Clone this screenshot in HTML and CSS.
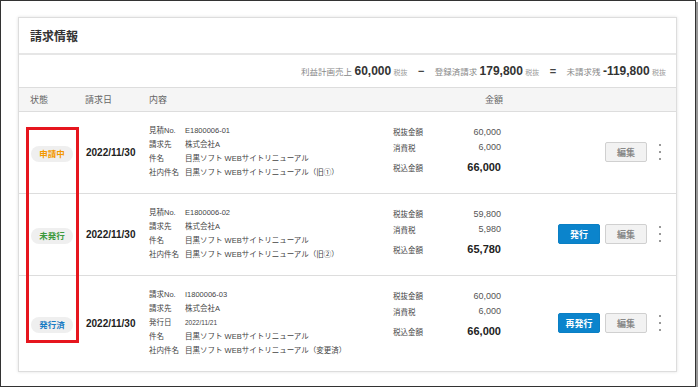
FILE: index.html
```html
<!DOCTYPE html>
<html lang="ja">
<head>
  <meta charset="UTF-8">
  <title>請求情報</title>
  <link rel="stylesheet" href="styles.css">
</head>
<body>
  <div class="frame">
    <div class="card">
      <div class="card-head">請求情報</div>
      <div class="summary">
        利益計画売上 <b>60,000</b> <small>税抜</small>
        <em>−</em>
        登録済請求 <b>179,800</b> <small>税抜</small>
        <em>=</em>
        未請求残 <b>-119,800</b> <small>税抜</small>
      </div>
      <div class="row thead">
        <div>状態</div>
        <div>請求日</div>
        <div>内容</div>
        <div class="th-amt">金額</div>
        <div></div>
      </div>

      <div class="row">
        <div><span class="badge orange">申請中</span></div>
        <div class="date">2022/11/30</div>
        <div class="info">
          <span>見積No.</span><span>E1800006-01</span>
          <span>請求先</span><span>株式会社A</span>
          <span>件名</span><span>目黒ソフト WEBサイトリニューアル</span>
          <span>社内件名</span><span>目黒ソフト WEBサイトリニューアル（旧①）</span>
        </div>
        <div class="amt">
          <span>税抜金額</span><span class="num">60,000</span>
          <span>消費税</span><span class="num">6,000</span>
          <span>税込金額</span><span class="num total">66,000</span>
        </div>
        <div class="actions">
          <button class="btn">編集</button>
          <span class="kebab"><i></i><i></i><i></i></span>
        </div>
      </div>

      <div class="row">
        <div><span class="badge green">未発行</span></div>
        <div class="date">2022/11/30</div>
        <div class="info">
          <span>見積No.</span><span>E1800006-02</span>
          <span>請求先</span><span>株式会社A</span>
          <span>件名</span><span>目黒ソフト WEBサイトリニューアル</span>
          <span>社内件名</span><span>目黒ソフト WEBサイトリニューアル（旧②）</span>
        </div>
        <div class="amt">
          <span>税抜金額</span><span class="num">59,800</span>
          <span>消費税</span><span class="num">5,980</span>
          <span>税込金額</span><span class="num total">65,780</span>
        </div>
        <div class="actions">
          <button class="btn primary">発行</button>
          <button class="btn">編集</button>
          <span class="kebab"><i></i><i></i><i></i></span>
        </div>
      </div>

      <div class="row">
        <div><span class="badge blue">発行済</span></div>
        <div class="date">2022/11/30</div>
        <div class="info">
          <span>請求No.</span><span>I1800006-03</span>
          <span>請求先</span><span>株式会社A</span>
          <span>発行日</span><span class="small">2022/11/21</span>
          <span>件名</span><span>目黒ソフト WEBサイトリニューアル</span>
          <span>社内件名</span><span>目黒ソフト WEBサイトリニューアル（変更済）</span>
        </div>
        <div class="amt">
          <span>税抜金額</span><span class="num">60,000</span>
          <span>消費税</span><span class="num">6,000</span>
          <span>税込金額</span><span class="num total">66,000</span>
        </div>
        <div class="actions">
          <button class="btn primary">再発行</button>
          <button class="btn">編集</button>
          <span class="kebab"><i></i><i></i><i></i></span>
        </div>
      </div>
    </div>
    <div class="mark"></div>
  </div>
</body>
</html>
```

FILE: styles.css
```css
body {
  margin: 0;
  font-family: "Liberation Sans", "Noto Sans CJK JP", sans-serif;
  color: #333;
  background: #fff;
}
.frame {
  position: relative;
  box-sizing: border-box;
  width: 696px;
  height: 387px;
  padding: 16px 18px 0 17px;
  border: 1px solid #333;
  box-shadow: 2px 2px 0 #999;
}
.card {
  background: #fff;
  border: 1px solid #ddd;
  box-shadow: 0 0 3px rgba(0, 0, 0, 0.12);
}
.card-head {
  height: 35px;
  padding-left: 11px;
  display: flex;
  align-items: center;
  font-size: 12px;
  font-weight: bold;
  color: #333;
  border-bottom: 2px solid #e6e6e6;
}
.summary {
  height: 32px;
  line-height: 32px;
  padding-right: 10px;
  text-align: right;
  font-size: 8.5px;
  color: #888;
  border-bottom: 1px solid #ddd;
  white-space: nowrap;
}
.summary b {
  font-size: 12px;
  color: #333;
}
.summary small {
  font-size: 7px;
  color: #999;
}
.summary em {
  font-style: normal;
  font-weight: bold;
  font-size: 11px;
  color: #444;
  margin: 0 8px;
}
.row {
  display: grid;
  grid-template-columns: 55px 64px 244px 108px 1fr;
  align-items: center;
  padding: 12px 11px 13px 11px;
  border-bottom: 1px solid #ddd;
}
.row:last-child {
  border-bottom: none;
}
.thead {
  height: 23px;
  padding-top: 0;
  padding-bottom: 0;
  background: #f5f5f5;
  font-size: 9px;
  color: #666;
}
.th-amt {
  text-align: right;
  margin-right: -2px;
}
.badge {
  display: inline-block;
  width: 42px;
  height: 16px;
  line-height: 16px;
  margin-left: 1px;
  border-radius: 8px;
  background: #efefef;
  text-align: center;
  font-size: 8.5px;
  font-weight: bold;
}
.orange { color: #f39800; }
.green { color: #3d9a3d; }
.blue { color: #1b7cc4; }
.date {
  margin-left: 1px;
  font-size: 10px;
  font-weight: bold;
  color: #222;
}
.info {
  display: grid;
  grid-template-columns: 36px 1fr;
  font-size: 7.5px;
  line-height: 14px;
  color: #444;
  white-space: nowrap;
}
.info .small {
  font-size: 6.5px;
}
.amt {
  align-self: start;
  display: grid;
  grid-template-columns: 1fr auto;
  grid-template-rows: 15px 16px 24px;
  align-items: center;
  font-size: 7.5px;
  color: #444;
}
.amt .num {
  text-align: right;
  font-size: 9px;
  color: #555;
}
.amt .total {
  font-size: 11px;
  font-weight: bold;
  color: #222;
}
.actions {
  display: flex;
  justify-content: flex-end;
  align-items: center;
  gap: 5px;
}
.btn {
  width: 42px;
  height: 20px;
  padding: 0;
  border: 1px solid #d0d0d0;
  border-radius: 2px;
  background: #f2f2f2;
  color: #888;
  font-family: inherit;
  font-size: 9px;
  font-weight: bold;
}
.btn.primary {
  border-color: #0a7fc4;
  background: #0b84cc;
  color: #fff;
}
.kebab {
  display: flex;
  flex-direction: column;
  align-items: center;
  gap: 4.5px;
  width: 10px;
  margin-left: 3px;
}
.kebab i {
  width: 2.5px;
  height: 2.5px;
  border-radius: 50%;
  background: #777;
}
.mark {
  position: absolute;
  left: 25px;
  top: 126px;
  width: 47px;
  height: 210px;
  border: 3px solid #e6161e;
}
```
